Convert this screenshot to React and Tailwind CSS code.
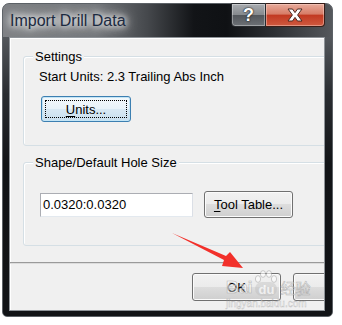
const ui = { fontFamily: '"Liberation Sans", Arial, sans-serif' };

function WinButton({ children, focused, className = '' }) {
  return (
    <div
      className={`relative shrink-0 flex items-center justify-center rounded-[3px] border text-[13px] leading-[15px] text-black ${
        focused
          ? 'border-[#3c7fb1] shadow-[inset_0_0_0_1px_#c4e5f6] bg-[linear-gradient(180deg,#f4f9fc_0%,#e8f2f9_50%,#d9e9f4_50%,#c9dfee_100%)]'
          : 'border-[#707070] shadow-[inset_0_0_0_1px_#fbfbfb] bg-[linear-gradient(180deg,#f2f2f2_0%,#ebebeb_50%,#dddddd_50%,#cfcfcf_100%)]'
      } ${className}`}
    >
      {focused && <div className="absolute inset-[3px] border border-dotted border-black"></div>}
      <span className="relative">{children}</span>
    </div>
  );
}

function GroupBox({ label, className = '', children }) {
  return (
    <div className={`relative ml-[13px] w-[330px] rounded-[3px] border border-[#d5dfe5] shadow-[inset_1px_1px_0_#fff] ${className}`}>
      <span className="absolute -top-[8px] left-[9px] px-[2px] bg-[#f0f0f0] text-[13px] leading-[15px] text-black">
        {label}
      </span>
      {children}
    </div>
  );
}

function Watermark() {
  return (
    <div className="absolute left-[226px] top-[270px] opacity-60 pointer-events-none" style={ui}>
      <div className="flex items-end">
        <span className="text-[17px] leading-[17px] font-bold text-white [-webkit-text-stroke:0.6px_#9a9a9a]">Bai</span>
        <div className="relative w-[24px] h-[26px] mx-[2px]">
          <svg width="24" height="18" viewBox="0 0 24 18" className="absolute top-0 left-0">
            <g fill="#fff" stroke="#9a9a9a" strokeWidth="0.8">
              <ellipse cx="4" cy="9" rx="2.6" ry="3.4" />
              <ellipse cx="9" cy="4" rx="2.6" ry="3.4" />
              <ellipse cx="15" cy="4" rx="2.6" ry="3.4" />
              <ellipse cx="20" cy="9" rx="2.6" ry="3.4" />
            </g>
          </svg>
          <div className="absolute left-[1px] top-[12px] w-[22px] h-[14px] rounded-[7px] bg-[#bdbdbd]/70 flex items-center justify-center">
            <span className="text-[13px] leading-[13px] font-bold text-white">du</span>
          </div>
        </div>
        <span
          className="text-[15px] leading-[17px] text-white [-webkit-text-stroke:0.6px_#9a9a9a]"
          style={{ fontFamily: '"Noto Sans CJK SC", sans-serif' }}
        >
          经验
        </span>
      </div>
      <div className="mt-[3px] text-[10px] leading-[10px] text-white [-webkit-text-stroke:0.4px_#a0a0a0]">jingyan.baidu.com</div>
    </div>
  );
}

export default function App() {
  return (
    <div className="relative w-[342px] h-[325px] bg-white overflow-hidden" style={ui}>
      {/* window frame */}
      <div className="ml-[2px] mt-[3px] w-[331px] h-[314px] flex flex-col rounded-t-[7px] rounded-b-[5px] border border-[#5c6166] bg-[linear-gradient(180deg,#6c7075_0px,#2a2d31_90px,#121417_160px,#111316_100%)]">
        {/* title bar */}
        <div className="h-[33px] shrink-0 flex items-start rounded-t-[6px] bg-[linear-gradient(90deg,#7e8185_0%,#74777b_28%,#45484c_44%,#121417_58%,#0f1114_68%,#2c2f33_82%,#55585c_100%)]">
          <span className="pl-[7px] pt-[8px] text-[16px] leading-[18px] text-[#1c2a40] [text-shadow:0_0_6px_#fff,0_0_10px_#fff,0_0_14px_#e8e8e8]">
            Import Drill Data
          </span>
          <div className="ml-auto mr-[7px] -mt-[1px] flex">
            <div className="w-[35px] h-[24px] flex items-center justify-center rounded-bl-[4px] border border-[#26292d] shadow-[inset_0_0_0_1px_rgba(255,255,255,0.35)] bg-[linear-gradient(180deg,#a9acb0_0%,#868a8e_48%,#53575c_52%,#6d7176_100%)]">
              <span className="text-[18px] leading-[18px] font-bold text-white [text-shadow:0_0_2px_#1a1a1a,0_0_1px_#000]">?</span>
            </div>
            <div className="w-[59px] h-[24px] flex items-center justify-center rounded-br-[4px] border border-l-0 border-[#3a1e18] shadow-[inset_0_0_0_1px_rgba(255,220,210,0.45)] bg-[linear-gradient(180deg,#e8ab9b_0%,#d77d68_45%,#c23a22_52%,#cf5a40_100%)]">
              <svg width="18" height="14" viewBox="0 0 18 14">
                <path
                  d="M2 1 H6.5 L9 4.6 L11.5 1 H16 L11.6 7 L16 13 H11.5 L9 9.4 L6.5 13 H2 L6.4 7 Z"
                  fill="#fff"
                  stroke="#4a2a22"
                  strokeWidth="1"
                  strokeLinejoin="round"
                />
              </svg>
            </div>
          </div>
        </div>

        {/* client area */}
        <div className="ml-[6px] w-[316px] h-[274px] shrink-0 overflow-hidden border border-[#8e9398] shadow-[inset_1px_1px_0_#fff] bg-[#f0f0f0]">
          <GroupBox label="Settings" className="mt-[18px] h-[90px]">
            <div className="pl-[15px] pt-[12px]">
              <div className="text-[13px] leading-[15px] text-black whitespace-nowrap">Start Units: 2.3 Trailing Abs Inch</div>
              <WinButton focused className="ml-[2px] mt-[12px] w-[90px] h-[26px]">
                <span className="underline underline-offset-2">U</span>nits...
              </WinButton>
            </div>
          </GroupBox>

          <GroupBox label="Shape/Default Hole Size" className="mt-[16px] h-[84px]">
            <div className="pl-[16px] pt-[28px] flex items-center">
              <div className="w-[153px] h-[24px] shrink-0 flex items-center pl-[2px] bg-white border border-[#abadb3] border-b-[#e3e9ef] border-r-[#dbdfe6] text-[13px] leading-[15px] text-black">
                0.0320:0.0320
              </div>
              <WinButton className="ml-[11px] w-[89px] h-[27px]">
                <span className="underline underline-offset-2">T</span>ool Table...
              </WinButton>
            </div>
          </GroupBox>

          <div className="mt-[16px] h-[2px] border-t border-[#9a9a9a] border-b border-b-[#dcdcdc]"></div>

          <div className="mt-[9px] pl-[182px] flex gap-[12px]">
            <WinButton className="w-[89px] h-[28px]">OK</WinButton>
            <WinButton className="w-[89px] h-[28px] justify-start pl-[30px]">Cancel</WinButton>
          </div>
        </div>
      </div>

      {/* red arrow annotation */}
      <svg className="absolute top-0 left-0 pointer-events-none" width="342" height="325" viewBox="0 0 342 325">
        <polygon points="172,233 226,256 230,252 243,268 222,266 224,260" fill="#f2302a" />
      </svg>

      <Watermark />
    </div>
  );
}
